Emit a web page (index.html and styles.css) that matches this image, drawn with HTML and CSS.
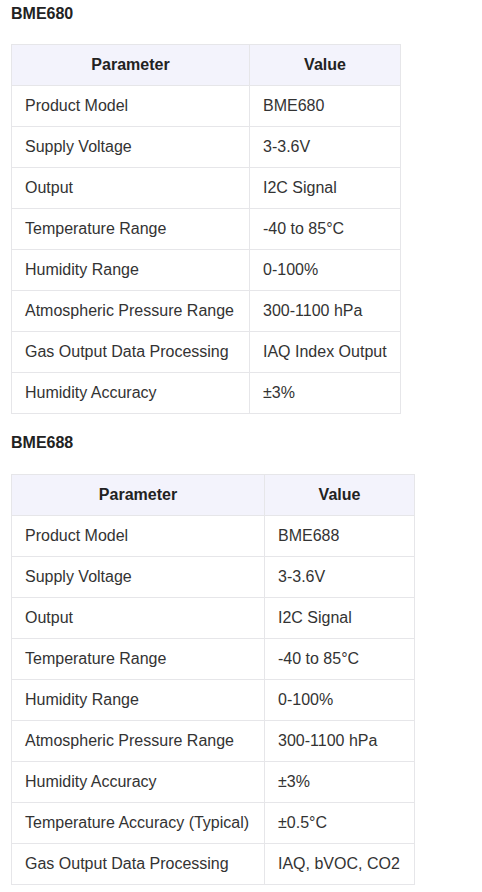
FILE: index.html
```html
<!DOCTYPE html>
<html>
<head>
<meta charset="utf-8">
<link rel="stylesheet" href="styles.css">
</head>
<body>
<h3 class="title first">BME680</h3>
<table class="spec spec-a">
  <colgroup><col class="c1"><col class="c2"></colgroup>
  <thead><tr><th>Parameter</th><th>Value</th></tr></thead>
  <tbody>
    <tr><td>Product Model</td><td>BME680</td></tr>
    <tr><td>Supply Voltage</td><td>3-3.6V</td></tr>
    <tr><td>Output</td><td>I2C Signal</td></tr>
    <tr><td>Temperature Range</td><td>-40 to 85°C</td></tr>
    <tr><td>Humidity Range</td><td>0-100%</td></tr>
    <tr><td>Atmospheric Pressure Range</td><td>300-1100 hPa</td></tr>
    <tr><td>Gas Output Data Processing</td><td>IAQ Index Output</td></tr>
    <tr><td>Humidity Accuracy</td><td>±3%</td></tr>
  </tbody>
</table>
<h3 class="title second">BME688</h3>
<table class="spec spec-b">
  <colgroup><col class="c1"><col class="c2"></colgroup>
  <thead><tr><th>Parameter</th><th>Value</th></tr></thead>
  <tbody>
    <tr><td>Product Model</td><td>BME688</td></tr>
    <tr><td>Supply Voltage</td><td>3-3.6V</td></tr>
    <tr><td>Output</td><td>I2C Signal</td></tr>
    <tr><td>Temperature Range</td><td>-40 to 85°C</td></tr>
    <tr><td>Humidity Range</td><td>0-100%</td></tr>
    <tr><td>Atmospheric Pressure Range</td><td>300-1100 hPa</td></tr>
    <tr><td>Humidity Accuracy</td><td>±3%</td></tr>
    <tr><td>Temperature Accuracy (Typical)</td><td>±0.5°C</td></tr>
    <tr><td>Gas Output Data Processing</td><td>IAQ, bVOC, CO2</td></tr>
  </tbody>
</table>
</body>
</html>
```
FILE: styles.css
```css
html, body {
  margin: 0;
  padding: 0;
  background: #ffffff;
}
body {
  padding: 0 11px;
  font-family: "Liberation Sans", Arial, sans-serif;
  color: #333333;
}
.title {
  font-size: 16px;
  line-height: 20px;
  font-weight: bold;
  color: #222222;
  margin: 0;
}
.title.first {
  margin: 4px 0 20px;
}
.title.second {
  margin: 19px 0 21px;
}
.spec {
  border-collapse: collapse;
  table-layout: fixed;
  font-size: 16px;
}
.spec-a { width: 389px; }
.spec-a .c1 { width: 238px; }
.spec-a .c2 { width: 151px; }
.spec-b { width: 403px; }
.spec-b .c1 { width: 253px; }
.spec-b .c2 { width: 150px; }
.spec th, .spec td {
  border: 1px solid #e6e6e9;
  height: 41px;
  padding: 0 13px;
  box-sizing: border-box;
  white-space: nowrap;
}
.spec th {
  background: #f3f3fc;
  color: #222222;
  font-weight: bold;
  text-align: center;
}
.spec td {
  text-align: left;
}
```
